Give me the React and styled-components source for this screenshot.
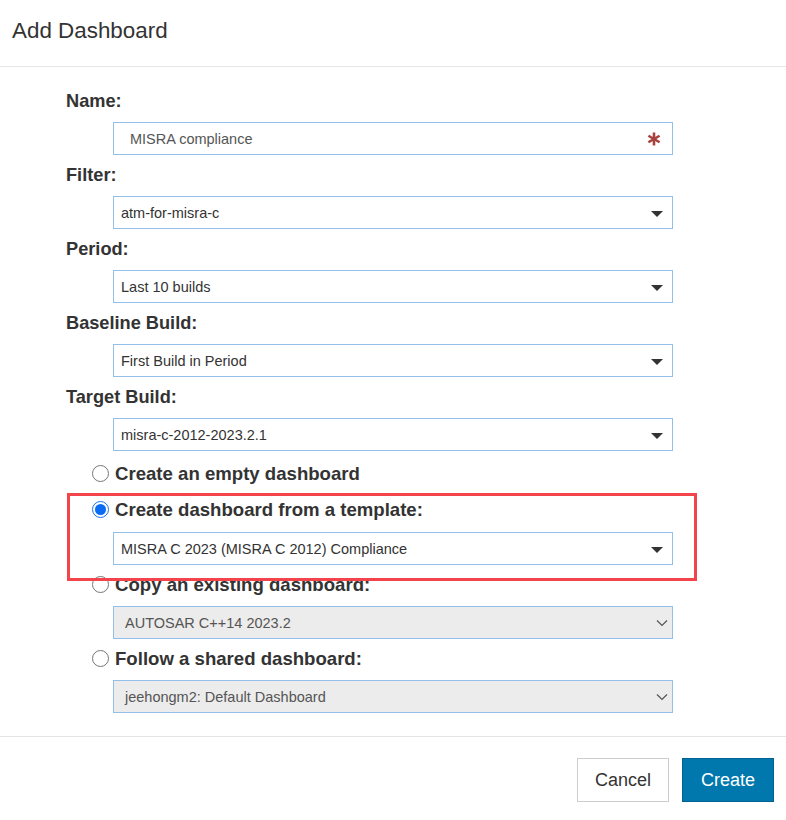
import React from 'react';
import styled, { createGlobalStyle } from 'styled-components';

const GlobalStyle = createGlobalStyle`
  html, body {
    margin: 0;
    padding: 0;
    background: #fff;
  }
  body {
    font-family: "Liberation Sans", Arial, sans-serif;
    color: #333;
  }
`;

const Dialog = styled.div`
  width: 786px;
  height: 820px;
  display: flex;
  flex-direction: column;
  background: #fff;
  position: relative;
`;

const Header = styled.div`
  height: 67px;
  border-bottom: 1px solid #e5e5e5;
  padding: 17px 0 0 12px;
  box-sizing: border-box;
`;

const Title = styled.h1`
  margin: 0;
  font-size: 22.4px;
  line-height: 28px;
  font-weight: normal;
  color: #333;
`;

const Body = styled.div`
  padding: 22px 0 0 66px;
  height: 670px;
  box-sizing: border-box;
  border-bottom: 1px solid #e5e5e5;
  position: relative;
`;

const Field = styled.div`
  display: flex;
  flex-direction: column;
  margin-bottom: 8px;
`;

const Label = styled.label`
  font-size: 18.2px;
  font-weight: bold;
  line-height: 24px;
  color: #333;
  margin-bottom: 9px;
`;

const Box = styled.div`
  margin-left: 47px;
  width: 560px;
  height: 33px;
  box-sizing: border-box;
  border: 1px solid #93bfea;
  background: ${p => (p.$disabled ? '#ececec' : '#fff')};
  display: flex;
  align-items: center;
  justify-content: space-between;
  padding: 0 ${p => p.$right || '9px'} 0 ${p => p.$pad || '7px'};
  font-size: 14.5px;
  color: ${p => (p.$muted ? '#555' : '#333')};
`;

const Caret = styled.span`
  width: 0;
  height: 0;
  border-left: 6px solid transparent;
  border-right: 6px solid transparent;
  border-top: 6px solid #333;
  margin-top: 2px;
`;

const RadioGroup = styled.div`
  display: flex;
  flex-direction: column;
  margin-left: 26px;
`;

const RadioRow = styled.label`
  display: flex;
  align-items: center;
  gap: 6px;
  font-size: 18.6px;
  font-weight: bold;
  line-height: 24px;
  color: #333;
  margin-top: ${p => p.$top || '0px'};
  margin-bottom: ${p => p.$bottom || '9px'};
`;

const RadioCircle = styled.span`
  width: 17px;
  height: 17px;
  border-radius: 50%;
  box-sizing: border-box;
  border: 1px solid ${p => (p.$checked ? '#1a73e8' : '#767676')};
  background: #fff;
  display: flex;
  align-items: center;
  justify-content: center;
  margin-top: -2px;

  &::after {
    content: '';
    width: 11px;
    height: 11px;
    border-radius: 50%;
    background: #0a6cf5;
    display: ${p => (p.$checked ? 'block' : 'none')};
  }
`;

const RadioBox = styled(Box)`
  margin-left: 21px;
`;

const Highlight = styled.div`
  position: absolute;
  left: 67px;
  top: 426px;
  width: 630px;
  height: 88px;
  box-sizing: border-box;
  border: 3px solid #f2444a;
  pointer-events: none;
`;

const Footer = styled.div`
  flex: 1;
  display: flex;
  justify-content: flex-end;
  align-items: flex-start;
  gap: 13px;
  padding: 21px 12px 0 0;
`;

const Button = styled.button`
  width: 92px;
  height: 44px;
  font-family: "Liberation Sans", Arial, sans-serif;
  font-size: 18px;
  cursor: pointer;
  border: 1px solid ${p => (p.$primary ? '#00628f' : '#ccc')};
  background: ${p => (p.$primary ? '#0077ad' : '#fff')};
  color: ${p => (p.$primary ? '#fff' : '#333')};
  padding: 0;
`;

const Asterisk = () => (
  <svg width="14" height="14" viewBox="0 0 14 14">
    <g stroke="#a8403e" strokeWidth="2.6" strokeLinecap="butt">
      <line x1="7" y1="0.5" x2="7" y2="13.5" />
      <line x1="1.4" y1="3.75" x2="12.6" y2="10.25" />
      <line x1="1.4" y1="10.25" x2="12.6" y2="3.75" />
    </g>
  </svg>
);

const Chevron = () => (
  <svg width="12" height="8" viewBox="0 0 12 8">
    <path d="M1 1.5 L6 6.5 L11 1.5" fill="none" stroke="#555" strokeWidth="1.2" />
  </svg>
);

const selects = [
  { label: 'Filter:', value: 'atm-for-misra-c' },
  { label: 'Period:', value: 'Last 10 builds' },
  { label: 'Baseline Build:', value: 'First Build in Period' },
  { label: 'Target Build:', value: 'misra-c-2012-2023.2.1' },
];

export default function App() {
  return (
    <>
      <GlobalStyle />
      <Dialog>
        <Header>
          <Title>Add Dashboard</Title>
        </Header>
        <Body>
          <Field>
            <Label>Name:</Label>
            <Box $pad="16px" $right="11px" $muted>
              <span>MISRA compliance</span>
              <Asterisk />
            </Box>
          </Field>
          {selects.map(s => (
            <Field key={s.label}>
              <Label>{s.label}</Label>
              <Box>
                <span>{s.value}</span>
                <Caret />
              </Box>
            </Field>
          ))}
          <RadioGroup>
            <RadioRow $top="3px" $bottom="12px">
              <RadioCircle />
              Create an empty dashboard
            </RadioRow>
            <RadioRow $bottom="10px">
              <RadioCircle $checked />
              Create dashboard from a template:
            </RadioRow>
            <RadioBox>
              <span>MISRA C 2023 (MISRA C 2012) Compliance</span>
              <Caret />
            </RadioBox>
            <RadioRow $top="8px">
              <RadioCircle />
              Copy an existing dashboard:
            </RadioRow>
            <RadioBox $disabled $pad="11px" $right="4px" $muted>
              <span>AUTOSAR C++14 2023.2</span>
              <Chevron />
            </RadioBox>
            <RadioRow $top="8px">
              <RadioCircle />
              Follow a shared dashboard:
            </RadioRow>
            <RadioBox $disabled $pad="11px" $right="4px" $muted>
              <span>jeehongm2: Default Dashboard</span>
              <Chevron />
            </RadioBox>
          </RadioGroup>
          <Highlight />
        </Body>
        <Footer>
          <Button>Cancel</Button>
          <Button $primary>Create</Button>
        </Footer>
      </Dialog>
    </>
  );
}
